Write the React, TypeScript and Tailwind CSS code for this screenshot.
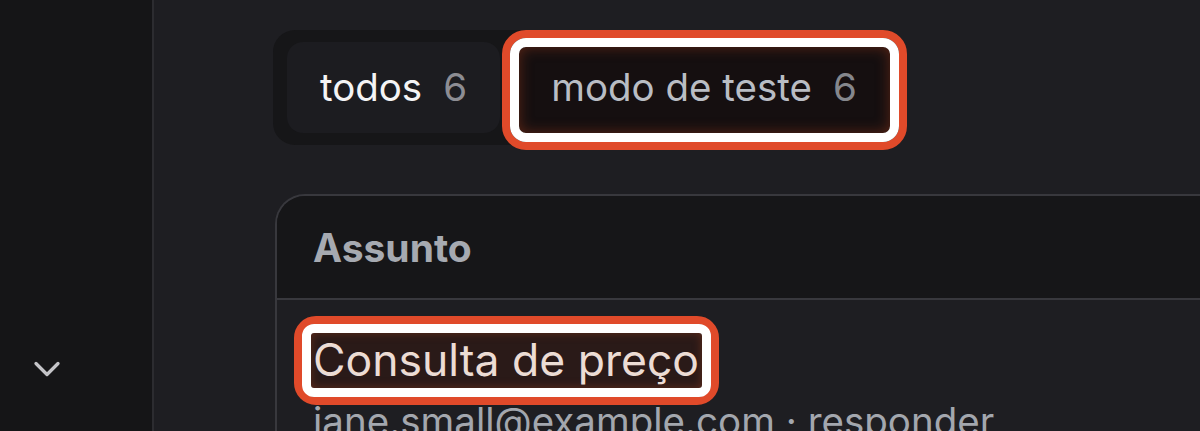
import React from "react";
import { ChevronDown } from "lucide-react";

const font = { fontFamily: "Inter, 'Noto Sans', sans-serif" };

export default function App() {
  return (
    <div
      className="flex h-[431px] w-[1200px] overflow-hidden bg-[#1e1e22]"
      style={font}
    >
      {/* Sidebar */}
      <aside className="flex w-[154px] shrink-0 flex-col border-r-2 border-[#2c2c30] bg-[#151517]">
        <div className="mt-auto mb-[40px] flex pl-[25px]">
          <ChevronDown size={44} strokeWidth={1.8} className="text-[#c4c4c8]" />
        </div>
      </aside>

      {/* Main */}
      <main className="flex min-w-0 flex-1 flex-col pl-[119px] pt-[30px]">
        {/* Tab group */}
        <div className="flex w-[631px] items-center gap-[18px] rounded-[22px] bg-[#161618] px-[14px] py-[12px]">
          <div className="flex h-[91px] w-[213px] items-center justify-center gap-[21px] rounded-[16px] bg-[#1c1c20] text-[38.5px] leading-none">
            <span className="text-[#f4f4f5]">todos</span>
            <span className="text-[#8d8d93]">6</span>
          </div>
          <div className="relative flex h-[91px] w-[372px] items-center justify-center gap-[21px] rounded-[16px] text-[38.5px] leading-none">
            <div className="absolute -left-[16px] -top-[12px] -right-[17px] -bottom-[17px] rounded-[24px] border-[8px] border-[#e04a2a]">
              <div className="h-full w-full rounded-[16px] border-[9px] border-white bg-[#150f10] shadow-[inset_0_0_14px_rgba(150,55,25,0.55)]" />
            </div>
            <span className="relative text-[#b9bdc4]">modo de teste</span>
            <span className="relative text-[#85878c]">6</span>
          </div>
        </div>

        {/* Table card */}
        <div className="mt-[49px] flex-1 rounded-tl-[30px] border-l-2 border-t-2 border-[#38383d] ml-[2px]">
          <div className="flex h-[104px] items-center rounded-tl-[28px] border-b-2 border-[#38383d] bg-[#161618] pl-[36px]">
            <span className="text-[39px] font-bold leading-none text-[#a6aab1]">
              Assunto
            </span>
          </div>
          <div className="pl-[36px] pt-[34px]">
            <div className="relative inline-flex">
              <div className="absolute -left-[19px] -top-[18px] -right-[20px] -bottom-[19px] rounded-[22px] border-[8px] border-[#e04a2a]">
                <div className="h-full w-full rounded-[12px] border-[9px] border-white bg-[#2a1a18] shadow-[inset_0_0_10px_rgba(150,60,30,0.5)]" />
              </div>
              <span className="relative text-[44.5px] leading-[52px] text-[#ecdcd4]">
                Consulta de preço
              </span>
            </div>
            <div className="mt-[16px] whitespace-nowrap text-[38.5px] leading-none text-[#a3a7ae]">
              jane.small@example.com · responder
            </div>
          </div>
        </div>
      </main>
    </div>
  );
}
